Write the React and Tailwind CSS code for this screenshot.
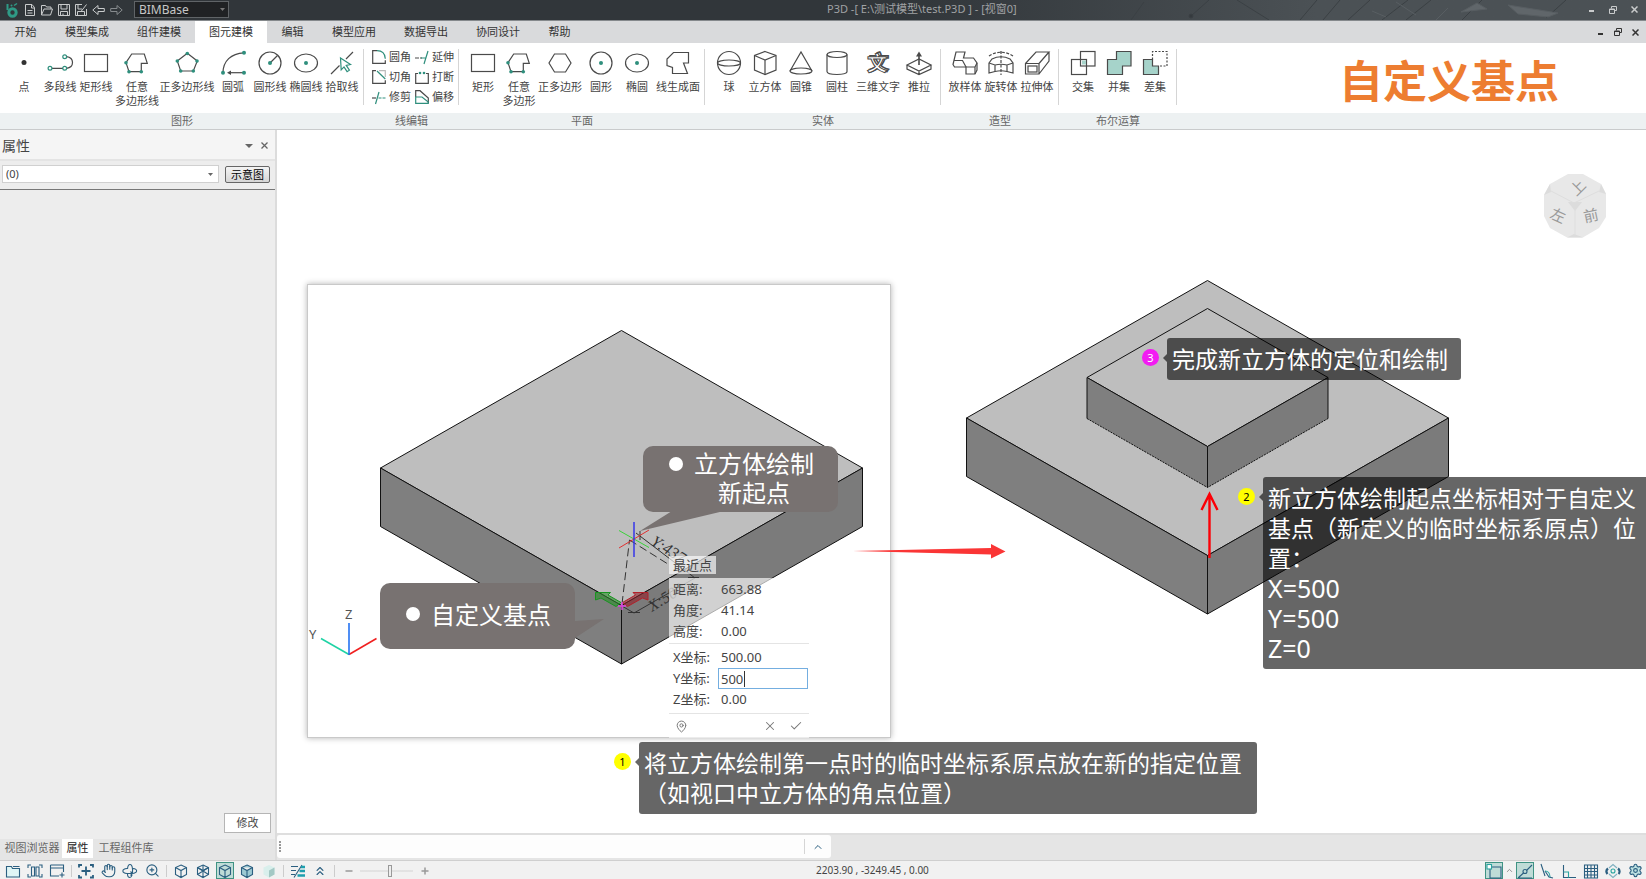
import { Check, ChevronUp, ChevronsUp, Hand, MapPin, Settings, X, ZoomIn } from 'lucide-react';

const INK = '#4a4a4a';
const TEAL = '#2f8f7d';
const NAVY = '#2b5f80';

const menuTabs = ['开始', '模型集成', '组件建模', '图元建模', '编辑', '模型应用', '数据导出', '协同设计', '帮助'];

function Icon({ size = 26, children }) {
  return (
    <svg width={size} height={size} viewBox={`0 0 ${size} ${size}`} fill="none" stroke={INK} strokeWidth="1.2" className="shrink-0 overflow-visible">
      {children}
    </svg>
  );
}

function Dot({ x, y, r = 1.8 }) {
  return <circle cx={x} cy={y} r={r} fill={TEAL} stroke="none" />;
}

const icons = {
  point: <circle cx="13" cy="12.5" r="2.5" fill="#333" stroke="none" />,
  polyline: (
    <>
      <path d="M5 18.3h11M19.5 6.7c8 1 8 10.6 0 11.6" />
      <g stroke={TEAL}>
        <circle cx="3" cy="18.3" r="1.9" />
        <circle cx="17.7" cy="18.3" r="1.9" />
        <circle cx="17.7" cy="6.7" r="1.9" />
      </g>
    </>
  ),
  rect: <rect x="1.5" y="4.5" width="23" height="17" />,
  freeform: (
    <>
      <path d="M2 12.7 7.7 4H20.3l3 9.3h-6v8.4H5z" />
      <Dot x={2} y={12.7} />
      <Dot x={5} y={21.7} />
      <Dot x={17.3} y={21.7} />
    </>
  ),
  pentagon: (
    <>
      <path d="M13.3 3.3 23.3 11 19.3 21H6.7L3.3 11z" />
      <Dot x={13.3} y={3.5} />
      <Dot x={23} y={11} />
      <Dot x={19.3} y={21} />
      <Dot x={6.7} y={21} />
      <Dot x={3.3} y={11} />
    </>
  ),
  arc: (
    <>
      <path d="M3 23C3 11 11 3.5 24 2.8" />
      <path d="M9 22.7h15" />
      <path d="M7 22.7l4-2.2v4.4z" fill={INK} stroke="none" />
      <Dot x={3} y={22.7} r={2} />
      <Dot x={24} y={2.8} r={2} />
      <Dot x={24} y={22.7} r={2} />
    </>
  ),
  circleLine: (
    <>
      <circle cx="13" cy="13" r="11" />
      <path d="M13 13l7.5-7.5" />
      <Dot x={13} y={13} r={2} />
    </>
  ),
  ellipse: (
    <>
      <ellipse cx="13" cy="13" rx="11.5" ry="9" />
      <Dot x={13} y={13} r={2} />
    </>
  ),
  pick: (
    <>
      <path d="M2 24l8.5-8.5M17 9l7-7" />
      <path d="M11.5 8l10 6.5-4.3.9 3.2 4.8-2.3 1.5-3.1-4.8-2.8 3z" stroke={TEAL} fill="#fff" />
    </>
  ),
  hexagon: <path d="M7.5 4h11L24 13l-5.5 9h-11L2 13z" />,
  disc: (
    <>
      <circle cx="13" cy="13" r="11" />
      <Dot x={13} y={13} r={2} />
    </>
  ),
  face: <path d="M8.5 2.5h15V13h-5l4 10.5h-15v-6L2 15.5V9z" />,
  sphere: (
    <>
      <circle cx="13" cy="13" r="11.5" />
      <ellipse cx="13" cy="13" rx="11.5" ry="3" />
    </>
  ),
  box: (
    <>
      <path d="M13 1.5l11 4V20l-11 4.5L2.5 20V5.5z" />
      <path d="M2.5 5.5L13 10l11-4.5M13 10v14.5" />
    </>
  ),
  cone: (
    <>
      <path d="M2 21L13 2l11 19" />
      <ellipse cx="13" cy="21" rx="11" ry="3" />
    </>
  ),
  cylinder: (
    <>
      <ellipse cx="13" cy="4.5" rx="10" ry="3" />
      <path d="M3 4.5v17c0 4 20 4 20 0v-17" />
    </>
  ),
  text3d: (
    <>
      <text x="4" y="20" fontSize="20" fontWeight="700" fill="#fff" strokeWidth="1.5">文</text>
      <text x="2" y="21" fontSize="20" fontWeight="700" fill="#fff" strokeWidth="1" aria-hidden="true">文</text>
    </>
  ),
  push: (
    <>
      <path d="M1 15l12-6 12 6-12 6zM1 15v4l12 5.5L25 19v-4M13 21v3.5" />
      <path d="M13 15V5" strokeWidth="1.6" />
      <path d="M13 1.5l3 5h-6z" fill={INK} stroke="none" />
    </>
  ),
  loft: (
    <>
      <path d="M4 2h9l-1.500 6h10L25 13v7l-2 4h-9v-7H2.500L1 14.500z" />
      <path d="M2 10.500h8.500L14 17h9l2-4M23 17v7" />
    </>
  ),
  revolve: (
    <>
      <path d="M1 6c7-5 17-5 24 0M13 1v24" strokeDasharray="3 1.5" />
      <path d="M1 13l3-4c6-3 12-3 18 0l3 4v10l-6-1.500c-4-1-8-1-12 0L1 23z" />
      <path d="M1 13l6 2c4-1 8-1 12 0l6-2M7 15v6.500M19 15v6.500" />
    </>
  ),
  extrude: (
    <>
      <path d="M1.500 13.500H15V24H1.500zM1.500 13.500L12 2h13L15 13.500M25 2v9L15 24" />
      <rect x="4" y="16" width="9" height="6" />
    </>
  ),
  intersect: (
    <>
      <rect x="1.5" y="9.5" width="15" height="15" />
      <rect x="10.5" y="1.5" width="14.5" height="14.5" />
      <rect x="12" y="10.5" width="4" height="4" fill="#a6d3ca" stroke="none" />
    </>
  ),
  union: <path d="M10.500 1.500H25V16h-8.500v8.500h-15v-15h9z" fill="#a6d3ca" />,
  subtract: (
    <>
      <path d="M1.500 9.500h9V16h6v8.500h-15z" fill="#a6d3ca" />
      <path d="M10.500 9.500v-8H25V16h-8.500" strokeDasharray="2 1.5" />
    </>
  ),
};

const editTools = [
  ['圆角', <><path d="M5 .7H.7v12.6h12.6v-3" /><path d="M5 .7c5 0 8 3 8.3 8" stroke={TEAL} /></>],
  ['延伸', <><path d="M0 8h7" strokeDasharray="4 1" /><path d="M13 1L9 14M6 8h5" stroke={TEAL} /></>],
  ['切角', <><path d="M4 .7H.7v12.6h12.6v-3" /><path d="M5 1l8.300 8" stroke={TEAL} /><path d="M7 .7h6.300V7" stroke="#bbb" /></>],
  ['打断', <><path d="M3 3.500H.7v9.800h12.600V3.500H11" /><Dot x={5} y={3} r={1.3} /><Dot x={9} y={3} r={1.3} /></>],
  ['修剪', <><path d="M0 8h4" /><path d="M7 2L3.500 14" stroke={TEAL} /><path d="M6.500 8H14" stroke={TEAL} strokeDasharray="3 1" /></>],
  ['偏移', <><path d="M.7 7V.7H5l8.300 7.300v5" /><path d="M.7 7H7l6.300 5v1.300H.7z" stroke={TEAL} /></>],
];

const ribbonGroups = [
  {
    title: '图形',
    tools: [
      ['点', 'point', 'w-9'],
      ['多段线', 'polyline', 'w-9'],
      ['矩形线', 'rect', 'w-9'],
      ['任意\n多边形线', 'freeform', 'w-[46px]'],
      ['正多边形线', 'pentagon', 'w-[54px]'],
      ['圆弧', 'arc', 'w-[38px]'],
      ['圆形线', 'circleLine', 'w-9'],
      ['椭圆线', 'ellipse', 'w-9'],
      ['拾取线', 'pick', 'w-9'],
    ],
  },
  { title: '线编辑', tools: null },
  {
    title: '平面',
    tools: [
      ['矩形', 'rect', 'w-9'],
      ['任意\n多边形', 'freeform', 'w-9'],
      ['正多边形', 'hexagon', 'w-[46px]'],
      ['圆形', 'disc', 'w-9'],
      ['椭圆', 'ellipse', 'w-9'],
      ['线生成面', 'face', 'w-[46px]'],
    ],
  },
  {
    title: '实体',
    tools: [
      ['球', 'sphere', 'w-9'],
      ['立方体', 'box', 'w-9'],
      ['圆锥', 'cone', 'w-9'],
      ['圆柱', 'cylinder', 'w-9'],
      ['三维文字', 'text3d', 'w-[46px]'],
      ['推拉', 'push', 'w-9'],
    ],
  },
  {
    title: '造型',
    tools: [
      ['放样体', 'loft', 'w-9'],
      ['旋转体', 'revolve', 'w-9'],
      ['拉伸体', 'extrude', 'w-9'],
    ],
  },
  {
    title: '布尔运算',
    tools: [
      ['交集', 'intersect', 'w-9'],
      ['并集', 'union', 'w-9'],
      ['差集', 'subtract', 'w-9'],
    ],
  },
];

function Caret({ className }) {
  return (
    <svg width="5" height="3" viewBox="0 0 5 3" className={className}>
      <path d="M0 0h5L2.5 3z" fill="currentColor" />
    </svg>
  );
}

function WindowButtons({ className }) {
  return (
    <div className={`flex items-center ${className}`}>
      <button type="button" aria-label="最小化">
        <svg width="7" height="7" viewBox="0 0 7 7"><path d="M1 5h5" stroke="currentColor" strokeWidth="2" /></svg>
      </button>
      <button type="button" aria-label="还原">
        <svg width="8" height="8" viewBox="0 0 8 8" fill="none" stroke="currentColor">
          <path d="M2.500 2.500v-2h5v4h-2M.5 3h5v4.500h-5zM.5 3.500h5" />
        </svg>
      </button>
      <button type="button" aria-label="关闭">
        <svg width="7" height="7" viewBox="0 0 7 7"><path d="M.5 .5l6 6M6.500 .5l-6 6" stroke="currentColor" strokeWidth="1.5" /></svg>
      </button>
    </div>
  );
}

function TitleBar() {
  return (
    <header className="relative flex h-[21px] shrink-0 items-center overflow-hidden border-b border-[#85898c] bg-linear-to-r from-[#31363a] from-55% to-[#4b5155] to-80% pb-px">
      <svg viewBox="0 0 560 20" className="absolute top-0 right-0 h-5 w-[560px]" fill="none" stroke="#3b4044">
        <path d="M45 20L58 2M105 16L123 0M151 0l32 20M214 20l17-20M237 20l17-20M262 20l22-20M296 20l26-20M320 20l25-20M376 20l20-20M460 18l20-18" />
        <circle cx="105" cy="16" r="2" fill="#353a3e" />
        <path d="M286 11l14 6M310 2l20 13M375 12l16-9 10 6zM422 5l50 8-10 4-30-3z M350 20l12-12" fill="#60666a" stroke="#585e62" />
      </svg>
      <div className="relative flex items-center gap-[5px] pl-1.5 text-[#c9cbcc]">
        <svg width="12" height="16" viewBox="0 0 12 16" fill="none" stroke="#2f9a86" className="mr-px">
          <circle cx="6.5" cy="10.500" r="3.7" strokeWidth="3" />
          <path d="M1.500 2v6" strokeWidth="2" />
          <circle cx="5.5" cy="3.5" r="1" fill="#2f9a86" stroke="none" />
          <path d="M8 3.500l3-2" strokeWidth="1.5" />
        </svg>
        <button type="button" aria-label="新建">
          <svg width="12" height="12" viewBox="0 0 12 12" fill="none" stroke="currentColor" className="block">
            <path d="M1.500 .5H8L10.500 3.500v8h-9zM7.500 .5V4h3M3.500 6.500h5M3.500 9h5" />
          </svg>
        </button>
        <button type="button" aria-label="打开">
          <svg width="12" height="12" viewBox="0 0 12 12" fill="none" stroke="currentColor" className="block">
            <path d="M.5 11V1.500h4l1 1.500H10v2M.5 11L3 5h8.500l-2 6z" />
          </svg>
        </button>
        <button type="button" aria-label="保存">
          <svg width="12" height="12" viewBox="0 0 12 12" fill="none" stroke="currentColor" className="block">
            <path d="M.5 .5h11v11H.5zM3 .5V5h6V.5M2.500 11.500v-4h7v4M5 9.500v2" />
          </svg>
        </button>
        <button type="button" aria-label="另存为">
          <svg width="12" height="12" viewBox="0 0 12 12" fill="none" stroke="currentColor" className="block">
            <path d="M7 .5H.5v11h11V5M3 .5V5h4M2.500 11.500v-4h7v4M11.500 .5L6 7.500" />
          </svg>
        </button>
        <button type="button" aria-label="撤销">
          <svg width="13" height="12" viewBox="0 0 13 12" fill="none" stroke="currentColor" className="block">
            <path d="M.8 6L6 1.500v3h6.300v3H6v3z" />
          </svg>
        </button>
        <button type="button" aria-label="重做" className="text-[#868a8d]">
          <svg width="13" height="12" viewBox="0 0 13 12" fill="none" stroke="currentColor" className="block">
            <path d="M12.200 6L7 1.500v3H.7v3H7v3z" />
          </svg>
        </button>
      </div>
      <div className="relative ml-[11px] flex items-center">
        <select aria-label="工作空间" className="h-[17px] w-[95px] appearance-none border border-[#606467] bg-[#202224] px-1 text-[12px] leading-[14px] text-[#c6c6c6]">
          <option>BIMBase</option>
        </select>
        <Caret className="absolute right-1 text-[#777]" />
      </div>
      <h1 className="absolute left-1/2 ml-1 text-[11px] text-[#a0a2a4]">P3D -[ E:\测试模型\test.P3D ] - [视窗0]</h1>
      <WindowButtons className="relative ml-auto gap-[14px] pr-2 text-[#c9cbcc]" />
    </header>
  );
}

function MenuBar() {
  return (
    <nav className="flex h-[22px] shrink-0 items-center bg-[#d9dadc] text-[11px] text-[#333]">
      {menuTabs.map((tab) => (
        <button
          key={tab}
          type="button"
          className={`h-full ${tab.length === 2 ? 'w-[51px]' : 'w-[72px]'} ${tab === '图元建模' ? 'bg-white' : ''}`}
        >
          {tab}
        </button>
      ))}
      <WindowButtons className="ml-auto gap-2.5 pr-[7px] text-[#333]" />
    </nav>
  );
}

function Ribbon() {
  return (
    <section className="flex h-[87px] shrink-0 border-b border-[#c9cbcc] bg-white text-[11px] text-[#444]">
      {ribbonGroups.map((group) => (
        <div key={group.title} className="flex flex-col justify-between">
          {group.tools ? (
            <div className="mt-1.5 flex h-14 border-r border-[#d5d5d5] pt-px pr-[3px] pl-1.5">
              {group.tools.map(([label, icon, width]) => (
                <button key={label} type="button" className={`flex flex-col items-center gap-1 ${width}`}>
                  <Icon>{icons[icon]}</Icon>
                  <span className="leading-[14px] whitespace-pre">{label}</span>
                </button>
              ))}
            </div>
          ) : (
            <div className="mt-1.5 grid h-14 grid-cols-2 content-center gap-x-1 border-r border-[#d5d5d5] pr-1 pl-2">
              {editTools.map(([label, shape]) => (
                <button key={label} type="button" className="flex h-5 items-center gap-[3px] whitespace-nowrap">
                  <Icon size={14}>{shape}</Icon>
                  {label}
                </button>
              ))}
            </div>
          )}
          <div className="h-4 bg-[#edf1f2] text-center leading-4 text-[#666]">{group.title}</div>
        </div>
      ))}
      <div className="flex flex-1 flex-col justify-between">
        <h2 className="mt-1.5 pr-[87px] text-right text-[44px] leading-[64px] font-bold text-[#ed7d31]">自定义基点</h2>
        <div className="h-4 bg-[#edf1f2]" />
      </div>
    </section>
  );
}

function PropertyPanel() {
  return (
    <aside className="flex w-[277px] shrink-0 flex-col border-r-2 border-[#dcdcdc] bg-[#ededed] text-[11px] text-[#444]">
      <div className="flex h-[31px] items-center border-b-2 border-[#e4e4e4] bg-[#f5f5f5] pt-0.5 pr-[7px] pl-0.5">
        <h2 className="text-[14px]">属性</h2>
        <button type="button" aria-label="面板菜单" className="ml-auto px-2">
          <svg width="8" height="4" viewBox="0 0 8 4"><path d="M0 0h8L4 4z" fill="#666" /></svg>
        </button>
        <button type="button" aria-label="关闭面板">
          <svg width="7" height="7" viewBox="0 0 7 7"><path d="M.5 .5l6 6M6.500 .5l-6 6" stroke="#666" strokeWidth="1.3" /></svg>
        </button>
      </div>
      <div className="flex h-[29px] items-center gap-1.5 border-b border-[#777] pr-[5px] pb-0.5 pl-0.5">
        <div className="relative flex flex-1 items-center">
          <select aria-label="构件" className="h-[18px] w-full appearance-none border border-[#d0d0d0] bg-white px-[3px] text-[11px] leading-4">
            <option>(0)</option>
          </select>
          <Caret className="absolute right-1.5 text-[#666]" />
        </div>
        <button type="button" className="h-[17px] w-[45px] rounded-[2px] border border-[#666] bg-linear-to-b from-[#f4f4f4] to-[#d6d6d6] leading-[15px] text-black">
          示意图
        </button>
      </div>
      <div className="flex flex-1 items-end justify-end px-1 pb-1.5">
        <button type="button" className="h-5 w-[47px] border border-[#b5b5b5] bg-white leading-4">修改</button>
      </div>
      <div className="flex h-[21px] bg-[#e5e5e5] pb-0.5 pl-0.5 text-[#666]">
        <button type="button" className="w-[60px]">视图浏览器</button>
        <button type="button" className="w-[31px] bg-white text-[#222]">属性</button>
        <button type="button" className="w-[66px]">工程组件库</button>
      </div>
    </aside>
  );
}

function Slab({ cx, top, half, rise, depth, dashed }) {
  const mid = top + rise;
  const front = mid + rise;
  return (
    <g stroke="#111" strokeLinejoin="round">
      <path d={`M${cx} ${top}L${cx + half} ${mid}L${cx} ${front}L${cx - half} ${mid}z`} fill="#bebebe" />
      <path d={`M${cx - half} ${mid}L${cx} ${front}V${front + depth}L${cx - half} ${mid + depth}z`} fill="#7f7f7f" stroke="none" />
      <path d={`M${cx + half} ${mid}L${cx} ${front}V${front + depth}L${cx + half} ${mid + depth}z`} fill="#7b7b7b" stroke="none" />
      <path
        d={`M${cx - half} ${mid + depth}L${cx} ${front + depth}L${cx + half} ${mid + depth}`}
        fill="none"
        strokeDasharray={dashed ? '2 1' : undefined}
      />
      <path
        d={`M${cx - half} ${mid + depth}V${mid}L${cx} ${front}L${cx + half} ${mid}V${mid + depth}M${cx} ${front}V${front + depth}`}
        fill="none"
      />
    </g>
  );
}

function Scene() {
  return (
    <svg width="1369" height="703" viewBox="277 130 1369 703" className="absolute top-0 left-0 max-w-none" fill="none">
      <Slab cx={621.5} top={330.5} half={241} rise={137.5} depth={58.5} />
      <Slab cx={1207.5} top={280.5} half={241} rise={137.5} depth={58.5} />
      <Slab cx={1207.5} top={308.5} half={120.5} rise={69} depth={41} dashed />

      {/* dimension lines from the base point */}
      <g stroke="#333">
        <path d="M622 604l7.500-64M629.500 540l40 25" strokeDasharray="8 4" />
        <path d="M640 531v9M636 533l59 45M688 577.500h11M622 606l12 7 61-35M628 612.500h12" />
      </g>
      <g fontFamily="Liberation Serif, serif" fontStyle="italic" fontSize="16" fill="#333">
        <text transform="translate(650 544) rotate(32)">Y:437</text>
        <text transform="translate(652 612) rotate(-32)">X:500</text>
      </g>

      <path d="M595.500 592.500h15l-2.500 2.500 13 7.500-5 4-15-8.500-5.500 2z" fill="#2c8f2c99" stroke="#17951f" />
      <path d="M648 592.500h-15l2.500 2.500-13 7.500 5 4 15-8.500 5.500 2z" fill="#93202a99" stroke="#b3202a" />
      <path d="M618 606h8M622 602v8" stroke="#e045e0" strokeWidth="1.5" />

      <path d="M619 530.500l30 17" stroke="#3bd23b" />
      <path d="M619 548l30-18" stroke="#e03030" />
      <path d="M634 522v35" stroke="#3636e8" strokeWidth="1.5" />

      {/* world axes */}
      <g strokeWidth="1.6">
        <path d="M349 654.500l-28-16" stroke="#1fd3a5" />
        <path d="M349 654.500l27.500-16" stroke="#f02020" />
        <path d="M349 655v-32" stroke="#2472f2" />
      </g>
      <g fontFamily="Noto Sans, sans-serif" fontSize="13" fill="#555">
        <text x="345" y="619">Z</text>
        <text x="309" y="639">Y</text>
      </g>

      {/* callout tails */}
      <path d="M672 511l-32 20 84-20zM575 621l29-2-29 19z" fill="#787271" />

      <path d="M853 551l138-3v-4l14.500 7.500-14.500 7v-4z" fill="#fa3535" />
      <path d="M1209.500 558v-63M1201.500 510l8-16 8 16" stroke="#fb0007" strokeWidth="2.4" />
    </svg>
  );
}

function ViewCube() {
  return (
    <svg width="64" height="66" viewBox="0 0 64 66" className="absolute top-[43px] right-[39px]">
      <path d="M25 1h15l18 10 5 10v23l-7 11-17 10H25L7 55 1 43V22l6-11z" fill="#e8e8e8" />
      <path d="M25 29h14l-7 9zM1 22l6-11 1 8zM63 21l-5-10-2 8zM25 64l6-3 8 3z" fill="#dcdcdc" />
      <path d="M8 18l23 12 25-12M32 36v26" stroke="#dedede" fill="none" />
      <g fill="#999" fontSize="15" textAnchor="middle">
        <text transform="translate(35 15) rotate(-45)" y="5">上</text>
        <text transform="translate(15 43) rotate(24)" y="5">左</text>
        <text transform="translate(48 43) rotate(-12)" y="5">前</text>
      </g>
    </svg>
  );
}

function Note({ number, place, badge, children }) {
  return (
    <div className={`absolute flex items-start ${place}`}>
      <span className={`mt-[11px] flex size-[17px] shrink-0 items-center justify-center rounded-full text-[11px] leading-none ${badge}`}>
        {number}
      </span>
      <svg width="4" height="8" viewBox="0 0 4 8" className="mt-4 ml-1 shrink-0">
        <path d="M4 0v8L0 4z" fill="#000" fillOpacity="0.6" />
      </svg>
      <p className="flex-1 rounded-[3px] bg-black/60 px-[5px] py-1.5 text-[23px] leading-[30px] text-white">{children}</p>
    </div>
  );
}

function Bubble({ place, children }) {
  return (
    <div className={`absolute flex h-[66px] w-[195px] justify-center gap-[11px] rounded-[10px] bg-[#787271] pb-1 pl-0.5 text-[24px] leading-[29px] text-white ${place}`}>
      <i className="mt-2 size-3.5 shrink-0 rounded-full bg-white" />
      <p className="text-center">{children}</p>
    </div>
  );
}

function CoordPanel() {
  return (
    <div className="absolute top-[426px] left-[392px] text-[13px] text-[#444]">
      <div className="h-[18px] w-[47px] bg-white/65 pl-1 leading-[18px]">最近点</div>
      <dl className="mt-1 grid w-[140px] grid-cols-[48px_1fr] border-b border-[#e4e4e4] bg-white/65 py-px pl-1 leading-[21px]">
        <dt>距离:</dt>
        <dd>663.88</dd>
        <dt>角度:</dt>
        <dd>41.14</dd>
        <dt>高度:</dt>
        <dd>0.00</dd>
      </dl>
      <div className="grid w-[140px] grid-cols-[45px_1fr] items-center border-b border-[#e4e4e4] bg-white/65 py-[3px] pr-px pl-1 leading-[21px]">
        <label htmlFor="coord-x">X坐标:</label>
        <input id="coord-x" defaultValue="500.00" className="h-[21px] w-full bg-transparent px-[3px]" />
        <label htmlFor="coord-y">Y坐标:</label>
        <div className="flex h-[21px] items-center border border-[#74aee0] bg-white pl-0.5">
          <input id="coord-y" defaultValue="500" className="w-6 border-r border-[#333] leading-4" />
        </div>
        <label htmlFor="coord-z">Z坐标:</label>
        <input id="coord-z" defaultValue="0.00" className="h-[21px] w-full bg-transparent px-[3px]" />
      </div>
      <div className="flex h-6 w-[140px] items-center gap-3 bg-white/65 px-1.5 text-[#777]">
        <button type="button" aria-label="定位" className="mr-auto"><MapPin size={13} strokeWidth={1.8} /></button>
        <button type="button" aria-label="取消"><X size={14} strokeWidth={1.8} /></button>
        <button type="button" aria-label="确定"><Check size={14} strokeWidth={1.8} /></button>
      </div>
    </div>
  );
}

function Viewport() {
  return (
    <div className="relative flex-1 overflow-hidden bg-white">
      <div className="absolute top-[154px] left-[30px] h-[454px] w-[584px] border border-[#c9c9c9] bg-white shadow-[0_0_6px_rgba(0,0,0,0.3)]" />
      <Scene />
      <ViewCube />
      <CoordPanel />
      <Bubble place="top-[316px] left-[366px] pt-[3px]">
        立方体绘制
        <br />
        新起点
      </Bubble>
      <Bubble place="top-[453px] left-[103px] items-center [&>i]:mt-0">自定义基点</Bubble>
      <Note number="1" place="top-[612px] left-[337px] w-[643px]" badge="bg-[#ffff00] text-black">
        将立方体绘制第一点时的临时坐标系原点放在新的指定位置
        <br />
        （如视口中立方体的角点位置）
      </Note>
      <Note number="2" place="top-[347px] left-[961px] w-[412px]" badge="bg-[#ffff00] text-black">
        新立方体绘制起点坐标相对于自定义基点（新定义的临时坐标系原点）位置：
        <span className="block text-[25px]">X=500</span>
        <span className="block text-[25px]">Y=500</span>
        <span className="block text-[25px]">Z=0</span>
      </Note>
      <Note number="3" place="top-[208px] left-[865px] w-[319px]" badge="bg-[#f21cf2] text-white">
        完成新立方体的定位和绘制
      </Note>
    </div>
  );
}

function CommandStrip() {
  return (
    <div className="flex h-[27px] shrink-0 border-t-2 border-[#dedede] bg-[#e5e5e5] pb-0.5">
      <div className="flex w-[554px] items-center rounded-[3px] bg-[#fdfdfd]">
        <svg width="2" height="12" viewBox="0 0 2 12" className="ml-0.5">
          <path d="M1 0v12" stroke="#777" strokeWidth="1.5" strokeDasharray="2 1" />
        </svg>
        <input aria-label="命令行" className="h-full flex-1 bg-transparent px-2 text-[11px]" />
        <button type="button" aria-label="展开" className="flex h-[15px] w-[27px] items-center justify-center border-l border-[#d5d5d5] text-[#2b5f80]">
          <ChevronUp size={12} />
        </button>
      </div>
    </div>
  );
}

const cube = <path d="M8 2l5.500 2.500v7L8 14.500l-5.500-3v-7zM2.500 4.500L8 7.500l5.500-3M8 7.500v7" />;

const statusLeft = [
  [
    ['项目', <path d="M1.500 14V3.500h5l1 2h7V14zM8 3.500h6.500" fill="#dff5f5" />],
    ['平铺', <path d="M4.500 4h3v9h-3zM9 4h3v9H9zM1 5V2h3M12 2h3v3M1 11v3h3M15 11v3h-3" />],
    ['新建视图', <path d="M1.500 2h13v7M1.500 2v11H10M1.500 5h13M13 9.500v5M10.500 12h5" />],
  ],
  [
    ['全图', <path d="M1 4.500V2h3M12 2h3v2.500M1 12v2.500h3M15 12v2.500h-3M8 3.500v9M3.500 8h9" strokeWidth="1.8" />],
    ['平移', null],
    ['旋转', <path d="M5.500 6C6 0 10 0 10.500 6c.5 5-1 8.500-2.500 8.500S5.500 13 5.500 11M5 5.500C-.5 6-.5 10 5 10.500h5c6-.5 6-4.500 1-5M8.500 8.500l2 2-2 2" />],
    ['缩放', null],
  ],
  [
    ['线框', cube],
    ['隐藏线', <>{cube}<path d="M2.500 11.500l11-7M2.500 4.500l11 7M8 2v6" /></>],
    ['消隐', cube, true],
    ['着色', <g fill="#9cc9d2">{cube}</g>],
    ['渲染', <><path d="M8 2l5.500 2.500v7L8 14.500l-5.500-3v-7z" fill="#d9efec" stroke="none" /><path d="M8 7.500l5.500-3v7L8 14.500z" fill="#a3c8c4" stroke="none" /></>],
  ],
  [
    ['线宽', <><path d="M1 3.500h7M1 7.500h5M1 11.500h4M12 2L4 14.500" /><path d="M11 4h4M9.500 8H15M7.500 12.500H15" stroke="#1d9fae" strokeWidth="2.5" /></>],
    ['收起', null],
  ],
];

const statusRight = [
  ['对象捕捉', <><path d="M4 6v9h11V4H6" /><rect x="1" y="1.5" width="4.500" height="4.500" fill="#fff" stroke="#2aa5a0" /></>, true],
  ['中点捕捉', <><path d="M1 15l5.500-5M9.500 7.500L15 2M2 15h13" /><circle cx="8" cy="8.5" r="2" /></>, true],
  ['切点捕捉', <><path d="M2 1l4 12M6 8l4 6 4 1" /><path d="M6 8c3 0 5 2 5 6" stroke="#2aa5a0" /></>],
  ['正交', <><path d="M2.500 2v12.500H15" /><path d="M2.500 9h5v5.500" stroke="#2aa5a0" /></>],
  ['栅格', <path d="M1.500 2h13v13h-13zM4.500 2v13M8 2v13M11.500 2v13M1.500 5.500h13M1.500 8.500h13M1.500 12h13" />],
  ['视点', <><path d="M4 5l4-3.500L12 5M4 11l4 3.500 4-3.500" stroke="#7fb0c0" /><path d="M3 5.500C1 7 1 9 2.500 11M13 5.500c2 1.500 2 4 .5 5.500" strokeWidth="2.2" /><circle cx="8" cy="8" r="2" stroke="#2aa5a0" /></>],
  ['设置', null],
];

const statusGlyphs = {
  平移: <Hand size={15} strokeWidth={1.8} />,
  缩放: <ZoomIn size={15} strokeWidth={1.8} />,
  收起: <ChevronsUp size={14} strokeWidth={2} />,
  设置: <Settings size={15} strokeWidth={1.8} fill="#bfe3e3" />,
};

function StatusButton({ item: [label, shape, active] }) {
  return (
    <button type="button" aria-label={label} className="flex h-[17px] w-[22px] justify-center">
      <span className={`flex h-[17px] w-[18px] items-center justify-center border ${active ? 'border-[#3f9384] bg-[#bfdcd7]' : 'border-transparent'}`}>
        {shape ? (
          <svg width="16" height="16" viewBox="0 0 16 16" fill="none" stroke={NAVY} strokeWidth="1.1" className="shrink-0">
            {shape}
          </svg>
        ) : (
          statusGlyphs[label]
        )}
      </span>
    </button>
  );
}

function StatusBar() {
  return (
    <footer className="flex h-[19px] shrink-0 items-end border-t border-[#cfcfcf] bg-[#f1f1f1] text-[#2b5f80]">
      <div className="flex h-[17px] items-center pl-0.5">
        {statusLeft.map((group) => (
          <div key={group[0][0]} className="flex items-center">
            {group.map((item) => (
              <StatusButton key={item[0]} item={item} />
            ))}
            <span className="mx-[3px] h-3 w-px bg-[#ccc]" />
          </div>
        ))}
        <button type="button" aria-label="缩小" className="flex w-[22px] justify-center">
          <svg width="8" height="8"><path d="M.5 4h7" stroke="#999" strokeWidth="1.5" /></svg>
        </button>
        <input
          type="range"
          aria-label="显示比例"
          defaultValue="58"
          className="h-3 w-[53px] appearance-none bg-linear-to-b from-transparent from-45% via-[#999] via-50% to-transparent to-55% [&::-webkit-slider-thumb]:h-3 [&::-webkit-slider-thumb]:w-1 [&::-webkit-slider-thumb]:appearance-none [&::-webkit-slider-thumb]:border [&::-webkit-slider-thumb]:border-[#999] [&::-webkit-slider-thumb]:bg-[#eee]"
        />
        <button type="button" aria-label="放大" className="flex w-6 justify-center">
          <svg width="8" height="8"><path d="M.5 4h7M4 .5v7" stroke="#999" strokeWidth="1.5" /></svg>
        </button>
      </div>
      <output className="flex-1 pl-[379px] text-[10px] leading-[18px] text-[#444]">2203.90 , -3249.45 , 0.00</output>
      <div className="flex h-[17px] items-center">
        <StatusButton item={statusRight[0]} />
        <button type="button" aria-label="捕捉选项" className="w-[9px] text-[#777]">
          <ChevronUp size={9} />
        </button>
        {statusRight.slice(1).map((item) => (
          <StatusButton key={item[0]} item={item} />
        ))}
      </div>
    </footer>
  );
}

export default function App() {
  return (
    <div className="flex h-screen flex-col overflow-hidden bg-[#f1f1f1] font-['Noto_Sans','Noto_Sans_CJK_SC',sans-serif]">
      <TitleBar />
      <MenuBar />
      <Ribbon />
      <div className="flex min-h-0 flex-1">
        <PropertyPanel />
        <main className="flex min-w-0 flex-1 flex-col">
          <Viewport />
          <CommandStrip />
        </main>
      </div>
      <StatusBar />
    </div>
  );
}
